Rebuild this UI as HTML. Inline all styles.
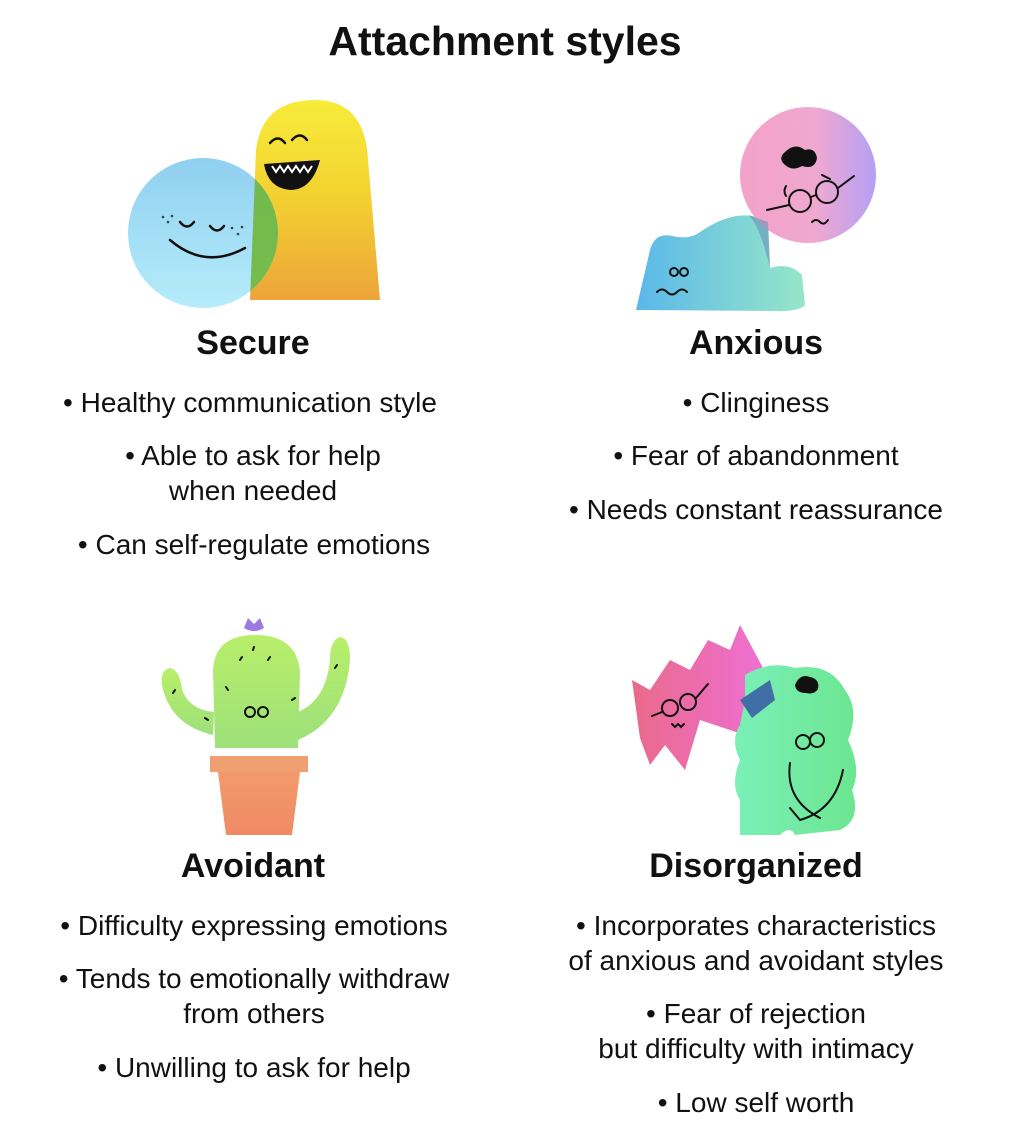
<!DOCTYPE html>
<html><head><meta charset="utf-8"><style>
body{margin:0;width:1018px;height:1132px;background:#fff;font-family:"Liberation Sans",sans-serif;color:#111;position:relative;overflow:hidden}
.t{position:absolute;text-align:center;white-space:nowrap;transform:translateX(-50%)}
.h{font-weight:bold;font-size:34px}
.l{font-size:28px;line-height:35px}
svg{position:absolute;left:0;top:0}
</style></head><body>
<div class="t" style="left:505px;top:18px;font-size:41px;font-weight:bold">Attachment styles</div>
<svg width="1018" height="1132">
<defs>
<linearGradient id="yl" x1="0" y1="0" x2="0" y2="1"><stop offset="0" stop-color="#f7ec3a"/><stop offset="0.5" stop-color="#f3d030"/><stop offset="1" stop-color="#eda43a"/></linearGradient>
<linearGradient id="bl" x1="0" y1="0" x2="0" y2="1"><stop offset="0" stop-color="#8fd0f0"/><stop offset="1" stop-color="#b6ecfa"/></linearGradient>
<linearGradient id="pk" x1="0" y1="0" x2="1" y2="0"><stop offset="0" stop-color="#f3a2c8"/><stop offset="0.55" stop-color="#f0a8d0"/><stop offset="1" stop-color="#b4a0f5"/></linearGradient>
<linearGradient id="ab" x1="0" y1="0" x2="1" y2="0"><stop offset="0" stop-color="#5ab8ea"/><stop offset="1" stop-color="#96e6c8"/></linearGradient>
<linearGradient id="cg" x1="0" y1="0" x2="0" y2="1"><stop offset="0" stop-color="#b8ef6a"/><stop offset="1" stop-color="#9ee07a"/></linearGradient>
<linearGradient id="pot" x1="0" y1="0" x2="0" y2="1"><stop offset="0" stop-color="#f29a6a"/><stop offset="1" stop-color="#ef8a66"/></linearGradient>
<linearGradient id="zz" x1="0" y1="0" x2="1" y2="0"><stop offset="0" stop-color="#ea6a8a"/><stop offset="1" stop-color="#ee70d8"/></linearGradient>
<linearGradient id="gr" x1="0" y1="0" x2="1" y2="0"><stop offset="0" stop-color="#7af0b8"/><stop offset="1" stop-color="#6ce690"/></linearGradient>
<clipPath id="cc"><circle cx="203" cy="233" r="75"/></clipPath>
</defs>
<!-- Secure -->
<path d="M250 300 L256 150 Q262 100 315 100 Q365 100 368 160 L380 300 Z" fill="url(#yl)"/>
<circle cx="203" cy="233" r="75" fill="url(#bl)"/>
<path d="M250 300 L256 150 Q262 100 315 100 Q365 100 368 160 L380 300 Z" fill="#6fb63a" clip-path="url(#cc)" opacity="0.9"/>
<g fill="none" stroke="#111" stroke-width="2.5" stroke-linecap="round">
<path d="M270 143 q8 -9 15 0 M292 140 q8 -9 15 0"/>
<path d="M180 222 q7 9 14 0 M210 226 q7 9 14 0"/>
<path d="M170 240 q35 30 75 8"/>
</g>
<g fill="#345"><circle cx="163" cy="217" r="1.3"/><circle cx="168" cy="222" r="1.3"/><circle cx="172" cy="216" r="1.3"/><circle cx="232" cy="228" r="1.3"/><circle cx="238" cy="234" r="1.3"/><circle cx="242" cy="227" r="1.3"/></g>
<path d="M264 164 Q292 162 320 160 Q312 190 290 190 Q268 188 264 164 Z" fill="#111"/>
<path d="M272 166 l4 6 4 -6 4 6 4 -6 4 6 4 -6 4 6 4 -6 4 6 4 -6" fill="none" stroke="#fff" stroke-width="2"/>
<!-- Anxious -->
<path d="M636 310 L650 250 Q655 232 672 236 Q690 240 700 232 Q740 205 768 222 L770 268 Q790 262 802 275 L805 305 Q800 311 780 311 Z" fill="url(#ab)"/>
<circle cx="808" cy="175" r="68" fill="url(#pk)"/>
<path d="M748 215 Q760 225 770 268 L768 222 Z" fill="#6a8fb8" opacity="0.6"/>
<path d="M785 152 q10 -10 20 -2 q10 -3 12 8 q-2 12 -15 8 q-10 6 -18 -2 q-6 -6 1 -12z" fill="#111"/>
<g fill="none" stroke="#111" stroke-width="2" stroke-linecap="round">
<circle cx="800" cy="201" r="11"/><circle cx="827" cy="192" r="11"/>
<path d="M811 197 l5 -2 M838 188 l16 -12 M789 205 l-22 5 M822 175 l8 4 M786 186 q-3 5 0 10 M812 222 q4 -4 8 0 q4 4 8 -2"/>
<path d="M657 292 q5 -5 10 0 q5 5 10 0 q5 -5 10 0" />
<circle cx="674" cy="272" r="4"/><circle cx="684" cy="272" r="4"/>
</g>
<!-- Avoidant -->
<path d="M215 748 L213 670 Q215 635 255 635 Q297 635 300 672 L298 748 Z" fill="url(#cg)"/>
<path d="M213 735 Q170 725 162 685 Q160 670 170 668 Q180 670 182 690 Q190 710 214 712 Z" fill="url(#cg)"/>
<path d="M298 740 Q345 720 350 660 Q350 638 340 637 Q330 640 330 660 Q326 700 298 712 Z" fill="url(#cg)"/>
<path d="M244 628 l4 -10 6 6 6 -6 4 10 q-10 6 -20 0z" fill="#9c7ae0"/>
<rect x="210" y="756" width="98" height="16" fill="#f0a070"/>
<path d="M218 772 L300 772 L292 835 L226 835 Z" fill="url(#pot)"/>
<g fill="none" stroke="#111" stroke-width="2" stroke-linecap="round">
<circle cx="250" cy="712" r="5"/><circle cx="263" cy="712" r="5"/>
<path d="M240 660 l2 -3 M268 660 l2 -3 M228 690 l-2 -3 M292 700 l3 -2 M175 690 l-2 3 M205 718 l3 2 M335 668 l2 -3 M253 650 l1 -3"/>
</g>
<!-- Disorganized -->
<path d="M632 680 L650 690 L670 660 L690 670 L708 640 L730 650 L740 625 L775 690 L760 740 L700 720 L685 770 L665 745 L650 765 L640 738 Z" fill="url(#zz)"/>
<path d="M745 675 Q770 660 795 668 Q830 662 845 690 Q860 710 848 740 Q862 770 852 790 Q862 820 840 830 L795 835 Q790 825 780 835 L740 835 L740 800 Q730 785 740 760 Q730 740 740 725 L745 700 Z" fill="url(#gr)"/>
<path d="M740 700 L770 680 L775 700 L752 718 Z" fill="#3f6fa5"/>
<path d="M795 685 q5 -12 15 -8 q10 2 8 12 q-4 6 -12 4 q-10 0 -11 -8z" fill="#111"/>
<g fill="none" stroke="#111" stroke-width="2" stroke-linecap="round">
<circle cx="803" cy="742" r="7"/><circle cx="817" cy="740" r="7"/>
<path d="M790 763 Q785 800 820 818 M843 770 Q835 810 800 820 L790 808"/>
<circle cx="670" cy="708" r="8"/><circle cx="688" cy="702" r="8"/>
<path d="M662 712 l-10 4 M696 698 l12 -14 M672 724 l3 3 3 -3 3 3 3 -3"/>
</g>
</svg>
<div class="t h" style="left:253px;top:324px">Secure</div>
<div class="t l" style="left:250px;top:385px">• Healthy communication style</div>
<div class="t l" style="left:253px;top:438px">• Able to ask for help<br>when needed</div>
<div class="t l" style="left:254px;top:527px">• Can self-regulate emotions</div>
<div class="t h" style="left:756px;top:324px">Anxious</div>
<div class="t l" style="left:756px;top:385px">• Clinginess</div>
<div class="t l" style="left:756px;top:438px">• Fear of abandonment</div>
<div class="t l" style="left:756px;top:492px">• Needs constant reassurance</div>
<div class="t h" style="left:253px;top:847px">Avoidant</div>
<div class="t l" style="left:254px;top:908px">• Difficulty expressing emotions</div>
<div class="t l" style="left:254px;top:961px">• Tends to emotionally withdraw<br>from others</div>
<div class="t l" style="left:254px;top:1050px">• Unwilling to ask for help</div>
<div class="t h" style="left:756px;top:847px">Disorganized</div>
<div class="t l" style="left:756px;top:908px">• Incorporates characteristics<br>of anxious and avoidant styles</div>
<div class="t l" style="left:756px;top:996px">• Fear of rejection<br>but difficulty with intimacy</div>
<div class="t l" style="left:756px;top:1085px">• Low self worth</div>
</body></html>
